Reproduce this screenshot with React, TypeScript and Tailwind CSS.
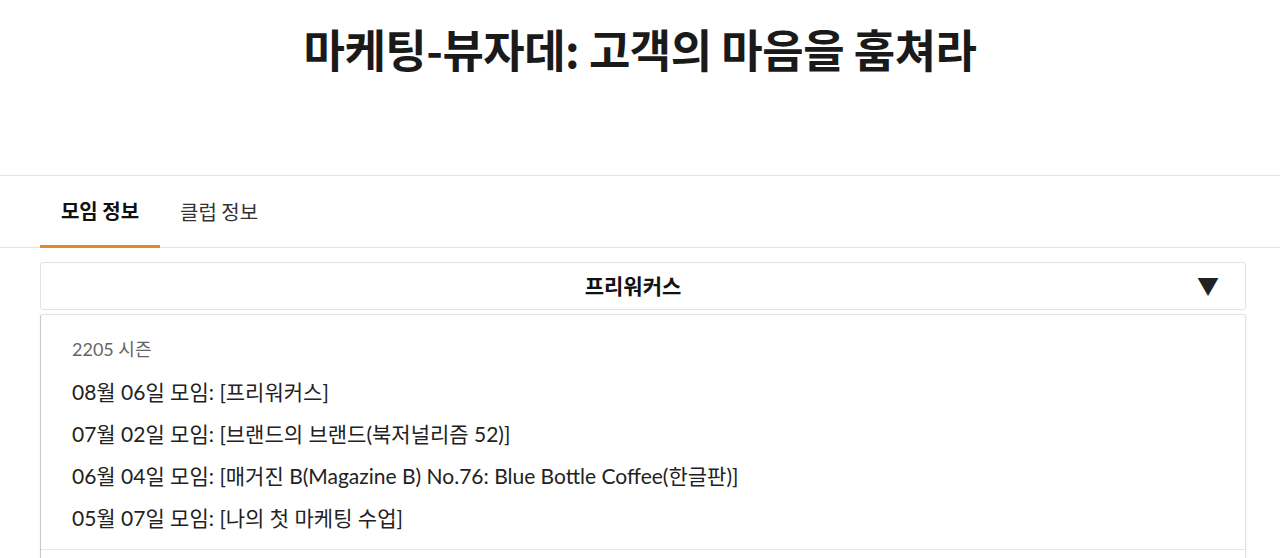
export default function App() {
  const meetings = [
    "08월 06일 모임: [프리워커스]",
    "07월 02일 모임: [브랜드의 브랜드(북저널리즘 52)]",
    "06월 04일 모임: [매거진 B(Magazine B) No.76: Blue Bottle Coffee(한글판)]",
    "05월 07일 모임: [나의 첫 마케팅 수업]",
  ];

  return (
    <div className="min-h-[558px] bg-white text-[#222] font-['Lato','Noto_Sans_CJK_KR',sans-serif]">
      {/* title */}
      <header className="h-[176px] border-b border-[#e3e3e3] pt-[20px] text-center">
        <h1 className="font-['Noto_Sans_CJK_KR',sans-serif] text-[45px] font-bold leading-[58px] tracking-[-0.5px] text-[#1a1a1a]">
          마케팅-뷰자데: 고객의 마음을 훔쳐라
        </h1>
      </header>

      {/* tabs */}
      <nav className="flex h-[72px] border-b border-[#e3e3e3] px-[40px] font-['Noto_Sans_CJK_KR',sans-serif] text-[20px]">
        <button className="-mb-px flex w-[120px] items-center justify-center border-b-[3px] border-[#e8862a] font-bold text-[#111]">
          모임 정보
        </button>
        <button className="flex items-center px-[20px] text-[#333]">클럽 정보</button>
      </nav>

      <div className="pl-[40px] pr-[34px] pt-[14px]">
        {/* select */}
        <div className="relative flex h-[48px] items-center justify-center rounded-[3px] border border-[#e2e2e2] pr-[20px]">
          <span className="font-['Noto_Sans_CJK_KR',sans-serif] text-[21px] font-bold text-[#111]">
            프리워커스
          </span>
          <span className="absolute right-[26px] top-1/2 -translate-y-1/2 text-[22px] leading-none text-[#222]">
            ▼
          </span>
        </div>

        {/* options panel */}
        <div className="mt-[4px] rounded-t-[3px] border border-l-[#c8c8c8] border-[#e2e2e2] shadow-[0_1px_3px_rgba(0,0,0,0.06)]">
          <div className="px-[31px] pb-[19px] pt-[22px]">
            <p className="text-[18px] leading-[24px] text-[#666]">2205 시즌</p>
            <ul className="mt-[19px] space-y-[18px] text-[21px] leading-[24px] text-[#222]">
              {meetings.map((m) => (
                <li key={m}>{m}</li>
              ))}
            </ul>
          </div>
          <div className="h-[20px] border-t border-[#e6e6e6]" />
        </div>
      </div>
    </div>
  );
}
